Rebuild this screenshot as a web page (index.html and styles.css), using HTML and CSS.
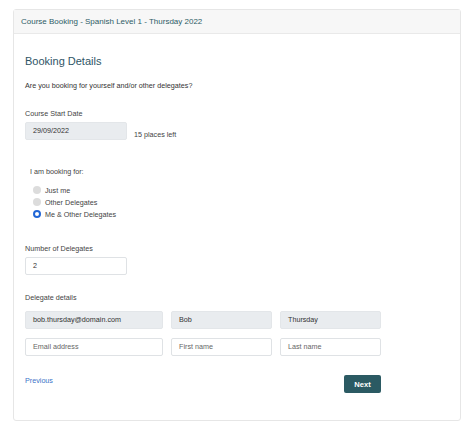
FILE: index.html
```html
<!DOCTYPE html>
<html lang="en">
<head>
  <meta charset="UTF-8" />
  <title>Course Booking</title>
  <link rel="stylesheet" href="styles.css">
</head>
<body>
  <div class="card">
    <div class="card-header">Course Booking - Spanish Level 1 - Thursday 2022</div>

    <div class="card-body">
      <h2>Booking Details</h2>
      <p class="intro">Are you booking for yourself and/or other delegates?</p>

      <label class="label">Course Start Date</label>
      <div class="date-row">
        <div class="input readonly short">29/09/2022</div>
        <span class="places">15 places left</span>
      </div>

      <!-- who is booking -->
      <div class="booking-for">
        <div class="label">I am booking for:</div>
        <div class="radio"><span class="dot disabled"></span>Just me</div>
        <div class="radio"><span class="dot disabled"></span>Other Delegates</div>
        <div class="radio"><span class="dot checked"></span>Me &amp; Other Delegates</div>
      </div>

      <label class="label">Number of Delegates</label>
      <div class="input short">2</div>

      <label class="label delegates-label">Delegate details</label>
      <div class="delegate-row">
        <div class="input readonly email">bob.thursday@domain.com</div>
        <div class="input readonly name">Bob</div>
        <div class="input readonly name">Thursday</div>
      </div>
      <div class="delegate-row">
        <div class="input email placeholder">Email address</div>
        <div class="input name placeholder">First name</div>
        <div class="input name placeholder">Last name</div>
      </div>

      <div class="actions">
        <a href="#" class="prev">Previous</a>
        <button class="next">Next</button>
      </div>
    </div>
  </div>
</body>
</html>
```

FILE: styles.css
```css
* {
  margin: 0;
  padding: 0;
  box-sizing: border-box;
}

body {
  background: #fff;
  font-family: "Liberation Sans", Arial, sans-serif;
  color: #333;
  padding: 9px 13px 10px 13px;
}

.card {
  border: 1px solid #e6e6e6;
  border-radius: 3px;
  height: 412px;
  display: flex;
  flex-direction: column;
}

.card-header {
  background: #f7f7f7;
  border-bottom: 1px solid #e9e9e9;
  height: 24px;
  line-height: 23px;
  padding-left: 7px;
  font-size: 8px;
  color: #2e5c66;
}

.card-body {
  padding: 20px 11px 0 11px;
  flex: 1;
}

h2 {
  font-weight: normal;
  font-size: 11px;
  color: #2e5566;
  line-height: 14px;
}

.intro {
  font-size: 7.2px;
  margin-top: 13px;
  line-height: 9px;
  color: #333;
}

.label {
  display: block;
  font-size: 7.2px;
  line-height: 9px;
  color: #444;
}

.intro + .label {
  margin-top: 19px;
}

.date-row {
  display: flex;
  align-items: flex-end;
  margin-top: 4px;
}

.input {
  height: 18px;
  border: 1px solid #dfe2e5;
  border-radius: 2px;
  font-size: 7.2px;
  line-height: 16px;
  padding-left: 7px;
  color: #333;
  background: #fff;
}

.input.readonly {
  background: #e9ecef;
  border-color: #e3e6e9;
}

.input.placeholder {
  color: #666;
}

.short {
  width: 102px;
}

.places {
  font-size: 7.2px;
  margin-left: 7px;
  margin-bottom: 1px;
  color: #444;
}

.booking-for {
  margin: 27px 0 24px 5px;
}

.booking-for .label {
  margin-bottom: 8px;
}

.radio {
  display: flex;
  align-items: center;
  font-size: 7.2px;
  height: 12px;
  color: #444;
}

.dot {
  width: 8px;
  height: 8px;
  border-radius: 50%;
  margin: 0 4px 0 3px;
  background: #dcdcdc;
}

.dot.checked {
  background: #fff;
  border: 2.5px solid #2166d6;
}

.input.short + .label {
  margin-top: 18px;
}

.label + .input.short {
  margin-top: 4px;
}

.delegate-row {
  display: flex;
  gap: 8px;
  margin-top: 9px;
}

.email {
  width: 138px;
}

.name {
  width: 101px;
}

.actions {
  display: flex;
  justify-content: space-between;
  align-items: flex-start;
  width: 356px;
  margin-top: 19px;
}

.prev {
  font-size: 7.2px;
  color: #3b73c8;
  text-decoration: none;
  margin-top: 1px;
}

.next {
  background: #2b5a63;
  color: #fff;
  border: none;
  border-radius: 2px;
  width: 37px;
  height: 18px;
  font-family: "Liberation Sans", Arial, sans-serif;
  font-size: 7.6px;
  font-weight: bold;
}
```
